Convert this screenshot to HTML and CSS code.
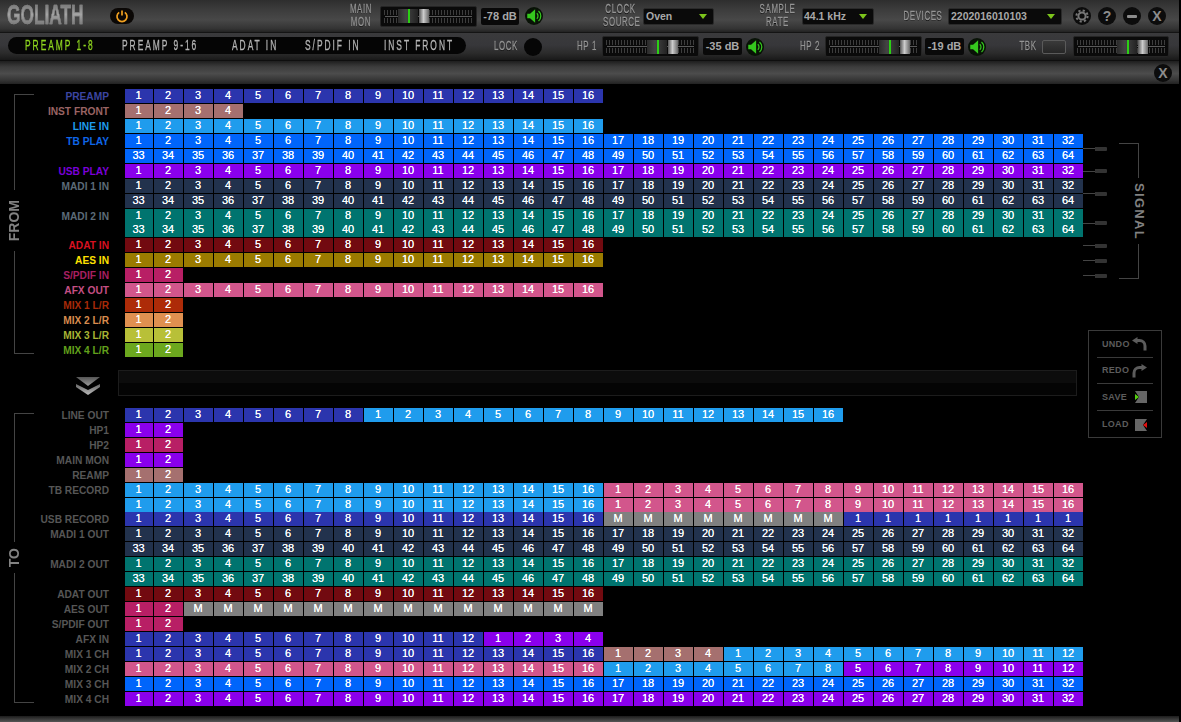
FILE: index.html
```html
<!DOCTYPE html>
<html lang="en">
<head>
<meta charset="utf-8">
<title>Goliath</title>
<link rel="stylesheet" href="styles.css">
</head>
<body>
<div class="app">
  <header class="bar top">
    <div class="logo">GOLIATH</div>
    <button class="power"><svg viewBox="0 0 14 14" width="14" height="14"><path d="M4.2 3.4a5 5 0 1 0 5.600 0" fill="none" stroke="#f0a020" stroke-width="1.7"/><path d="M7 1.500v5" stroke="#f0a020" stroke-width="1.7"/></svg></button>
    <div class="cap m-main">MAIN<br>MON</div>
    <div class="fader ml7"><div class="knob" style="margin-left:17px"><i></i></div><div class="knob2"></div></div>
    <div class="db ml4 w38">-78 dB</div>
    <div class="spk ml6"><svg viewBox="1 1 16 16" width="18" height="18"><path d="M3 7h2.500L10 3v12l-4.500-4H3z" fill="#35c81e"/><path d="M11.500 6.500a3.500 3.500 0 0 1 0 5M13 4.500a6 6 0 0 1 0 9" fill="none" stroke="#35c81e" stroke-width="1.100"/></svg></div>
    <div class="cap m-clock">CLOCK<br>SOURCE</div>
    <div class="drop ml5 w71">Oven<u></u></div>
    <div class="cap m-rate">SAMPLE<br>RATE</div>
    <div class="drop ml5 w72 tight">44.1 kHz<u></u></div>
    <div class="cap m-dev">DEVICES</div>
    <div class="drop ml5 w114">2202016010103<u></u></div>
    <div class="round m-gear"><svg viewBox="0 0 18 18" width="18" height="18"><circle cx="9" cy="9" r="3.600" fill="none" stroke="#777" stroke-width="2"/><circle cx="9" cy="9" r="5.600" fill="none" stroke="#777" stroke-width="2" stroke-dasharray="2.200 2.200"/></svg></div>
    <div class="round ml7">?</div>
    <div class="round ml7"><s></s></div>
    <div class="round ml7">X</div>
  </header>
  <nav class="bar sub">
    <div class="pill">
      <span class="tab on t1">PREAMP 1-8</span>
      <span class="tab t2">PREAMP 9-16</span>
      <span class="tab t3">ADAT IN</span>
      <span class="tab t4">S/PDIF IN</span>
      <span class="tab t5">INST FRONT</span>
    </div>
    <div class="cap m-lock">LOCK</div>
    <div class="lamp ml6"></div>
    <div class="cap m-hp1">HP 1</div>
    <div class="fader ml4"><div class="knob" style="margin-left:44px"><i></i></div><div class="knob2"></div></div>
    <div class="db ml4 w39">-35 dB</div>
    <div class="spk ml4"><svg viewBox="1 1 16 16" width="18" height="18"><path d="M3 7h2.500L10 3v12l-4.500-4H3z" fill="#35c81e"/><path d="M11.500 6.500a3.500 3.500 0 0 1 0 5M13 4.500a6 6 0 0 1 0 9" fill="none" stroke="#35c81e" stroke-width="1.100"/></svg></div>
    <div class="cap m-hp2">HP 2</div>
    <div class="fader ml4"><div class="knob" style="margin-left:53px"><i></i></div><div class="knob2"></div></div>
    <div class="db ml3 w39">-19 dB</div>
    <div class="spk ml4"><svg viewBox="1 1 16 16" width="18" height="18"><path d="M3 7h2.500L10 3v12l-4.500-4H3z" fill="#35c81e"/><path d="M11.500 6.500a3.500 3.500 0 0 1 0 5M13 4.500a6 6 0 0 1 0 9" fill="none" stroke="#35c81e" stroke-width="1.100"/></svg></div>
    <div class="cap m-tbk">TBK</div>
    <div class="tbk ml4"></div>
    <div class="fader ml7 w96"><div class="knob" style="margin-left:43px"><i></i></div><div class="knob2"></div></div>
  </nav>
  <div class="bar strip"><div class="round">X</div></div>

  <main class="patch">
    <section class="block from">
      <div class="bracket"><div class="seg-line first-line"></div><div class="side">FROM</div><div class="seg-line last-line"></div></div>
      <div class="rows">
        <div class="row"><span class="lbl l-navy">PREAMP</span><div class="cells navy"><b>1</b><b>2</b><b>3</b><b>4</b><b>5</b><b>6</b><b>7</b><b>8</b><b>9</b><b>10</b><b>11</b><b>12</b><b>13</b><b>14</b><b>15</b><b>16</b></div></div>
        <div class="row"><span class="lbl l-rose">INST FRONT</span><div class="cells rose"><b>1</b><b>2</b><b>3</b><b>4</b></div></div>
        <div class="row"><span class="lbl l-sky">LINE IN</span><div class="cells sky"><b>1</b><b>2</b><b>3</b><b>4</b><b>5</b><b>6</b><b>7</b><b>8</b><b>9</b><b>10</b><b>11</b><b>12</b><b>13</b><b>14</b><b>15</b><b>16</b></div></div>
        <div class="row"><span class="lbl l-blue">TB PLAY</span><div class="cells blue"><b>1</b><b>2</b><b>3</b><b>4</b><b>5</b><b>6</b><b>7</b><b>8</b><b>9</b><b>10</b><b>11</b><b>12</b><b>13</b><b>14</b><b>15</b><b>16</b><b>17</b><b>18</b><b>19</b><b>20</b><b>21</b><b>22</b><b>23</b><b>24</b><b>25</b><b>26</b><b>27</b><b>28</b><b>29</b><b>30</b><b>31</b><b>32</b></div></div>
        <div class="row"><span class="lbl"></span><div class="cells blue"><b>33</b><b>34</b><b>35</b><b>36</b><b>37</b><b>38</b><b>39</b><b>40</b><b>41</b><b>42</b><b>43</b><b>44</b><b>45</b><b>46</b><b>47</b><b>48</b><b>49</b><b>50</b><b>51</b><b>52</b><b>53</b><b>54</b><b>55</b><b>56</b><b>57</b><b>58</b><b>59</b><b>60</b><b>61</b><b>62</b><b>63</b><b>64</b></div></div>
        <div class="row"><span class="lbl l-purple">USB PLAY</span><div class="cells purple"><b>1</b><b>2</b><b>3</b><b>4</b><b>5</b><b>6</b><b>7</b><b>8</b><b>9</b><b>10</b><b>11</b><b>12</b><b>13</b><b>14</b><b>15</b><b>16</b><b>17</b><b>18</b><b>19</b><b>20</b><b>21</b><b>22</b><b>23</b><b>24</b><b>25</b><b>26</b><b>27</b><b>28</b><b>29</b><b>30</b><b>31</b><b>32</b></div></div>
        <div class="row"><span class="lbl l-slate">MADI 1 IN</span><div class="cells slate"><b>1</b><b>2</b><b>3</b><b>4</b><b>5</b><b>6</b><b>7</b><b>8</b><b>9</b><b>10</b><b>11</b><b>12</b><b>13</b><b>14</b><b>15</b><b>16</b><b>17</b><b>18</b><b>19</b><b>20</b><b>21</b><b>22</b><b>23</b><b>24</b><b>25</b><b>26</b><b>27</b><b>28</b><b>29</b><b>30</b><b>31</b><b>32</b></div></div>
        <div class="row"><span class="lbl"></span><div class="cells slate"><b>33</b><b>34</b><b>35</b><b>36</b><b>37</b><b>38</b><b>39</b><b>40</b><b>41</b><b>42</b><b>43</b><b>44</b><b>45</b><b>46</b><b>47</b><b>48</b><b>49</b><b>50</b><b>51</b><b>52</b><b>53</b><b>54</b><b>55</b><b>56</b><b>57</b><b>58</b><b>59</b><b>60</b><b>61</b><b>62</b><b>63</b><b>64</b></div></div>
        <div class="row"><span class="lbl l-slate">MADI 2 IN</span><div class="cells teal"><b>1</b><b>2</b><b>3</b><b>4</b><b>5</b><b>6</b><b>7</b><b>8</b><b>9</b><b>10</b><b>11</b><b>12</b><b>13</b><b>14</b><b>15</b><b>16</b><b>17</b><b>18</b><b>19</b><b>20</b><b>21</b><b>22</b><b>23</b><b>24</b><b>25</b><b>26</b><b>27</b><b>28</b><b>29</b><b>30</b><b>31</b><b>32</b></div></div>
        <div class="row"><span class="lbl"></span><div class="cells teal"><b>33</b><b>34</b><b>35</b><b>36</b><b>37</b><b>38</b><b>39</b><b>40</b><b>41</b><b>42</b><b>43</b><b>44</b><b>45</b><b>46</b><b>47</b><b>48</b><b>49</b><b>50</b><b>51</b><b>52</b><b>53</b><b>54</b><b>55</b><b>56</b><b>57</b><b>58</b><b>59</b><b>60</b><b>61</b><b>62</b><b>63</b><b>64</b></div></div>
        <div class="row"><span class="lbl l-red">ADAT IN</span><div class="cells wine"><b>1</b><b>2</b><b>3</b><b>4</b><b>5</b><b>6</b><b>7</b><b>8</b><b>9</b><b>10</b><b>11</b><b>12</b><b>13</b><b>14</b><b>15</b><b>16</b></div></div>
        <div class="row"><span class="lbl l-yellow">AES IN</span><div class="cells olive"><b>1</b><b>2</b><b>3</b><b>4</b><b>5</b><b>6</b><b>7</b><b>8</b><b>9</b><b>10</b><b>11</b><b>12</b><b>13</b><b>14</b><b>15</b><b>16</b></div></div>
        <div class="row"><span class="lbl l-magenta">S/PDIF IN</span><div class="cells magenta"><b>1</b><b>2</b></div></div>
        <div class="row"><span class="lbl l-pink">AFX OUT</span><div class="cells pink"><b>1</b><b>2</b><b>3</b><b>4</b><b>5</b><b>6</b><b>7</b><b>8</b><b>9</b><b>10</b><b>11</b><b>12</b><b>13</b><b>14</b><b>15</b><b>16</b></div></div>
        <div class="row"><span class="lbl l-rust">MIX 1 L/R</span><div class="cells rust"><b>1</b><b>2</b></div></div>
        <div class="row"><span class="lbl l-orange">MIX 2 L/R</span><div class="cells orange"><b>1</b><b>2</b></div></div>
        <div class="row"><span class="lbl l-lime">MIX 3 L/R</span><div class="cells lime"><b>1</b><b>2</b></div></div>
        <div class="row"><span class="lbl l-green">MIX 4 L/R</span><div class="cells green"><b>1</b><b>2</b></div></div>
      </div>
      <div class="ticks">
        <div class="tick t-a"></div><div class="tick t-b"></div><div class="tick t-c"></div><div class="tick t-d"></div><div class="tick t-e"></div><div class="tick t-f"></div><div class="tick t-g"></div>
      </div>
      <div class="signal"><div class="seg-line first-line"></div><div class="side-r">SIGNAL</div><div class="seg-line last-line"></div></div>
    </section>

    <div class="middle">
      <div class="arrows"><svg viewBox="0 0 26 18" width="26" height="18"><defs><linearGradient id="ga" x1="0" y1="0" x2="0" y2="1"><stop offset="0" stop-color="#555"/><stop offset="1" stop-color="#999"/></linearGradient><linearGradient id="gb" x1="0" y1="0" x2="0" y2="1"><stop offset="0" stop-color="#666"/><stop offset="1" stop-color="#bbb"/></linearGradient></defs><path d="M1 0h24L13 9z" fill="url(#ga)"/><path d="M1 7l12 6 12-6v3L13 18 1 10z" fill="url(#gb)"/></svg></div>
      <div class="display"></div>
    </div>

    <section class="block to">
      <div class="bracket"><div class="seg-line first-line"></div><div class="side">TO</div><div class="seg-line last-line"></div></div>
      <div class="rows">
        <div class="row"><span class="lbl">LINE OUT</span><div class="cells"><span class="seg navy"><b>1</b><b>2</b><b>3</b><b>4</b><b>5</b><b>6</b><b>7</b><b>8</b></span><span class="seg sky"><b>1</b><b>2</b><b>3</b><b>4</b><b>5</b><b>6</b><b>7</b><b>8</b><b>9</b><b>10</b><b>11</b><b>12</b><b>13</b><b>14</b><b>15</b><b>16</b></span></div></div>
        <div class="row"><span class="lbl">HP1</span><div class="cells purple"><b>1</b><b>2</b></div></div>
        <div class="row"><span class="lbl">HP2</span><div class="cells magenta"><b>1</b><b>2</b></div></div>
        <div class="row"><span class="lbl">MAIN MON</span><div class="cells purple"><b>1</b><b>2</b></div></div>
        <div class="row"><span class="lbl">REAMP</span><div class="cells rose"><b>1</b><b>2</b></div></div>
        <div class="row"><span class="lbl">TB RECORD</span><div class="cells"><span class="seg sky"><b>1</b><b>2</b><b>3</b><b>4</b><b>5</b><b>6</b><b>7</b><b>8</b><b>9</b><b>10</b><b>11</b><b>12</b><b>13</b><b>14</b><b>15</b><b>16</b></span><span class="seg pink"><b>1</b><b>2</b><b>3</b><b>4</b><b>5</b><b>6</b><b>7</b><b>8</b><b>9</b><b>10</b><b>11</b><b>12</b><b>13</b><b>14</b><b>15</b><b>16</b></span></div></div>
        <div class="row"><span class="lbl"></span><div class="cells"><span class="seg sky"><b>1</b><b>2</b><b>3</b><b>4</b><b>5</b><b>6</b><b>7</b><b>8</b><b>9</b><b>10</b><b>11</b><b>12</b><b>13</b><b>14</b><b>15</b><b>16</b></span><span class="seg pink"><b>1</b><b>2</b><b>3</b><b>4</b><b>5</b><b>6</b><b>7</b><b>8</b><b>9</b><b>10</b><b>11</b><b>12</b><b>13</b><b>14</b><b>15</b><b>16</b></span></div></div>
        <div class="row"><span class="lbl">USB RECORD</span><div class="cells"><span class="seg navy"><b>1</b><b>2</b><b>3</b><b>4</b><b>5</b><b>6</b><b>7</b><b>8</b><b>9</b><b>10</b><b>11</b><b>12</b><b>13</b><b>14</b><b>15</b><b>16</b></span><span class="seg grey"><b>M</b><b>M</b><b>M</b><b>M</b><b>M</b><b>M</b><b>M</b><b>M</b></span><span class="seg navy"><b>1</b><b>1</b><b>1</b><b>1</b><b>1</b><b>1</b><b>1</b><b>1</b></span></div></div>
        <div class="row"><span class="lbl">MADI 1 OUT</span><div class="cells slate"><b>1</b><b>2</b><b>3</b><b>4</b><b>5</b><b>6</b><b>7</b><b>8</b><b>9</b><b>10</b><b>11</b><b>12</b><b>13</b><b>14</b><b>15</b><b>16</b><b>17</b><b>18</b><b>19</b><b>20</b><b>21</b><b>22</b><b>23</b><b>24</b><b>25</b><b>26</b><b>27</b><b>28</b><b>29</b><b>30</b><b>31</b><b>32</b></div></div>
        <div class="row"><span class="lbl"></span><div class="cells slate"><b>33</b><b>34</b><b>35</b><b>36</b><b>37</b><b>38</b><b>39</b><b>40</b><b>41</b><b>42</b><b>43</b><b>44</b><b>45</b><b>46</b><b>47</b><b>48</b><b>49</b><b>50</b><b>51</b><b>52</b><b>53</b><b>54</b><b>55</b><b>56</b><b>57</b><b>58</b><b>59</b><b>60</b><b>61</b><b>62</b><b>63</b><b>64</b></div></div>
        <div class="row"><span class="lbl">MADI 2 OUT</span><div class="cells teal"><b>1</b><b>2</b><b>3</b><b>4</b><b>5</b><b>6</b><b>7</b><b>8</b><b>9</b><b>10</b><b>11</b><b>12</b><b>13</b><b>14</b><b>15</b><b>16</b><b>17</b><b>18</b><b>19</b><b>20</b><b>21</b><b>22</b><b>23</b><b>24</b><b>25</b><b>26</b><b>27</b><b>28</b><b>29</b><b>30</b><b>31</b><b>32</b></div></div>
        <div class="row"><span class="lbl"></span><div class="cells teal"><b>33</b><b>34</b><b>35</b><b>36</b><b>37</b><b>38</b><b>39</b><b>40</b><b>41</b><b>42</b><b>43</b><b>44</b><b>45</b><b>46</b><b>47</b><b>48</b><b>49</b><b>50</b><b>51</b><b>52</b><b>53</b><b>54</b><b>55</b><b>56</b><b>57</b><b>58</b><b>59</b><b>60</b><b>61</b><b>62</b><b>63</b><b>64</b></div></div>
        <div class="row"><span class="lbl">ADAT OUT</span><div class="cells wine"><b>1</b><b>2</b><b>3</b><b>4</b><b>5</b><b>6</b><b>7</b><b>8</b><b>9</b><b>10</b><b>11</b><b>12</b><b>13</b><b>14</b><b>15</b><b>16</b></div></div>
        <div class="row"><span class="lbl">AES OUT</span><div class="cells"><span class="seg magenta"><b>1</b><b>2</b></span><span class="seg grey"><b>M</b><b>M</b><b>M</b><b>M</b><b>M</b><b>M</b><b>M</b><b>M</b><b>M</b><b>M</b><b>M</b><b>M</b><b>M</b><b>M</b></span></div></div>
        <div class="row"><span class="lbl">S/PDIF OUT</span><div class="cells magenta"><b>1</b><b>2</b></div></div>
        <div class="row"><span class="lbl">AFX IN</span><div class="cells"><span class="seg navy"><b>1</b><b>2</b><b>3</b><b>4</b><b>5</b><b>6</b><b>7</b><b>8</b><b>9</b><b>10</b><b>11</b><b>12</b></span><span class="seg purple"><b>1</b><b>2</b><b>3</b><b>4</b></span></div></div>
        <div class="row"><span class="lbl">MIX 1 CH</span><div class="cells"><span class="seg navy"><b>1</b><b>2</b><b>3</b><b>4</b><b>5</b><b>6</b><b>7</b><b>8</b><b>9</b><b>10</b><b>11</b><b>12</b><b>13</b><b>14</b><b>15</b><b>16</b></span><span class="seg rose"><b>1</b><b>2</b><b>3</b><b>4</b></span><span class="seg sky"><b>1</b><b>2</b><b>3</b><b>4</b><b>5</b><b>6</b><b>7</b><b>8</b><b>9</b><b>10</b><b>11</b><b>12</b></span></div></div>
        <div class="row"><span class="lbl">MIX 2 CH</span><div class="cells"><span class="seg pink"><b>1</b><b>2</b><b>3</b><b>4</b><b>5</b><b>6</b><b>7</b><b>8</b><b>9</b><b>10</b><b>11</b><b>12</b><b>13</b><b>14</b><b>15</b><b>16</b></span><span class="seg sky"><b>1</b><b>2</b><b>3</b><b>4</b><b>5</b><b>6</b><b>7</b><b>8</b></span><span class="seg purple"><b>5</b><b>6</b><b>7</b><b>8</b><b>9</b><b>10</b><b>11</b><b>12</b></span></div></div>
        <div class="row"><span class="lbl">MIX 3 CH</span><div class="cells blue"><b>1</b><b>2</b><b>3</b><b>4</b><b>5</b><b>6</b><b>7</b><b>8</b><b>9</b><b>10</b><b>11</b><b>12</b><b>13</b><b>14</b><b>15</b><b>16</b><b>17</b><b>18</b><b>19</b><b>20</b><b>21</b><b>22</b><b>23</b><b>24</b><b>25</b><b>26</b><b>27</b><b>28</b><b>29</b><b>30</b><b>31</b><b>32</b></div></div>
        <div class="row"><span class="lbl">MIX 4 CH</span><div class="cells purple"><b>1</b><b>2</b><b>3</b><b>4</b><b>5</b><b>6</b><b>7</b><b>8</b><b>9</b><b>10</b><b>11</b><b>12</b><b>13</b><b>14</b><b>15</b><b>16</b><b>17</b><b>18</b><b>19</b><b>20</b><b>21</b><b>22</b><b>23</b><b>24</b><b>25</b><b>26</b><b>27</b><b>28</b><b>29</b><b>30</b><b>31</b><b>32</b></div></div>
      </div>
    </section>

    <aside class="history">
      <div class="hist-row"><span>UNDO</span><svg viewBox="0 0 15 14" width="15" height="14"><path d="M4 3.500h3.500a5.500 5.500 0 0 1 5.500 5.500v4.500" fill="none" stroke="#5c5c5c" stroke-width="3"/><path d="M0 3.500L5.500 0v7z" fill="#5c5c5c"/></svg></div>
      <div class="hist-row"><span>REDO</span><svg viewBox="0 0 15 14" width="15" height="14"><path d="M11 3.500H7.500A5.500 5.500 0 0 0 2 9v4.500" fill="none" stroke="#5c5c5c" stroke-width="3"/><path d="M15 3.500L9.500 0v7z" fill="#5c5c5c"/></svg></div>
      <div class="hist-row"><span>SAVE</span><svg viewBox="0 0 12 12" width="12" height="12"><path d="M0 0h12v12H0l4-6z" fill="#666"/><path d="M0 3l4 3-4 3z" fill="#55d010"/></svg></div>
      <div class="hist-row"><span>LOAD</span><svg viewBox="0 0 12 12" width="12" height="12"><path d="M0 0h12L8 6l4 6H0z" fill="#666"/><path d="M12 3L8 6l4 3z" fill="#e01010"/></svg></div>
    </aside>
  </main>
  <footer class="foot"></footer>
</div>
</body>
</html>
```
FILE: styles.css
```css
*{box-sizing:border-box}
html,body{margin:0;height:100%;background:#000}
body{font-family:"Liberation Sans",Arial,sans-serif;overflow:hidden}
.app{width:1179px;height:722px;display:flex;flex-direction:column;background:#000}

.bar{display:flex;align-items:center;flex:none}
.top{height:33px;background:linear-gradient(#2e2e2e,#3c3c3c 30%,#484848 62%,#333 90%,#222);border-bottom:1px solid #141414}
.sub{height:28px;background:linear-gradient(#3a3a3c,#37373a 45%,#2b2b2b 75%,#191919);border-bottom:1px solid #0e0e0e}
.strip{height:23px;justify-content:flex-end;padding-right:7px;background:linear-gradient(#1e1e1e,#3c3c3c 25%,#4c4c4c 55%,#333 85%,#222)}

/* squeezed display lettering: --w is the room it takes, --s the horizontal scale */
.logo,.cap,.tab{flex:none;width:calc(var(--w)/var(--s));margin-right:calc(var(--w) - var(--w)/var(--s));transform:scaleX(var(--s));transform-origin:left center;white-space:nowrap}

.logo{--w:76px;--s:.64;margin-left:7px;font:bold 27px/1.1 "Liberation Sans",sans-serif;background:linear-gradient(#6a6a6a,#a4a4a4 45%,#5e5e5e);-webkit-background-clip:text;background-clip:text;color:transparent;-webkit-text-stroke:.5px #858585}
.power{margin:0 0 0 27px;padding:0;width:24px;height:16px;border:0;border-radius:8px;background:#0a0705;display:flex;align-items:center;justify-content:center;flex:none}

.cap{--s:.63;font:12.5px/13px "Liberation Sans",sans-serif;color:#959595;letter-spacing:1px;text-align:center;text-shadow:0 1px 0 #111;-webkit-text-stroke:.3px #959595}
.m-main{--w:24px;margin-left:215px}
.m-clock{--w:35px;margin-left:60px}
.m-rate{--w:39px;margin-left:44px}
.m-dev{--w:40px;margin-left:29px}
.m-gear{margin-left:11px}
.m-lock{--w:24px;margin-left:28px}
.m-hp1{--w:22px;margin-left:34px}
.m-hp2{--w:22px;margin-left:35px}
.m-tbk{--w:20px;margin-left:32px}
.w38{width:38px}.w39{width:39px}.w71{width:71px}.w72{width:72px}.w114{width:114px}
.ml3{margin-left:3px}.ml4{margin-left:4px}.ml5{margin-left:5px}.ml6{margin-left:6px}.ml7{margin-left:7px}

.fader{flex:none;width:97px;height:21px;display:flex;align-items:center;border:1px solid #252525;border-radius:2px;
  background:
    linear-gradient(#5a5a5a,#5a5a5a) 4px 9px/87px 1px no-repeat,
    repeating-linear-gradient(90deg,#3d3d3d 0 1px,transparent 1px 3px) 3px 3px/89px 5px no-repeat,
    repeating-linear-gradient(90deg,#3d3d3d 0 1px,transparent 1px 3px) 3px 11px/89px 5px no-repeat,
    #0a0a0a}
.fader.w96{width:96px}
.knob{width:20px;height:14px;background:linear-gradient(90deg,#2a2a2a,#444 40%,#222);flex:none}
.knob i{display:block;width:2px;height:14px;margin-left:10px;background:#2bd014}
.knob2{width:10px;height:14px;margin-left:1px;background:linear-gradient(90deg,#555,#ccc 45%,#666);flex:none}
.db{flex:none;height:17px;background:#090909;border-radius:2px;font:bold 11px/17px "Liberation Sans",sans-serif;color:#a8a8a8;text-align:center;white-space:nowrap}
.spk{flex:none;width:18px;height:18px;border-radius:50%;background:#081206;display:flex}
.drop{flex:none;height:17px;background:#0a0a0a;border:1px solid #2a2a2a;border-radius:2px;font:bold 10.5px/15px "Liberation Sans",sans-serif;color:#a8a8a8;padding-left:2px;display:flex;justify-content:space-between;align-items:center}
.drop.tight{padding-left:1px}
.drop u{width:0;height:0;border:4px solid transparent;border-top:5px solid #7cc41c;border-bottom:0;margin-right:6px}
.round{flex:none;width:18px;height:18px;border-radius:50%;background:#0c0c0c;color:#8c8c8c;font:bold 14px/18px "Liberation Sans",sans-serif;text-align:center;display:flex;align-items:center;justify-content:center}
.round s{display:block;width:10px;height:3px;border-radius:1px;background:#8c8c8c}

.pill{flex:none;margin-left:8px;margin-top:-2px;width:458px;height:17px;border-radius:9px;background:#050505;padding-left:17px;display:flex;align-items:center}
.tab{--s:.6;font:14px/17px "Liberation Sans",sans-serif;letter-spacing:3.3px;color:#b4b4b4;-webkit-text-stroke:.3px #b4b4b4}
.tab.on{color:#8ed41f;-webkit-text-stroke:.3px #8ed41f}
.t1{--w:97px}.t2{--w:110px}.t3{--w:73px}.t4{--w:79px}.t5{--w:66px}
.lamp{flex:none;width:18px;height:18px;border-radius:50%;background:#060606}
.tbk{flex:none;width:24px;height:14px;border:1px solid #5a5a5a;border-radius:2px;background:linear-gradient(#3a3a3a,#262626)}

.patch{position:relative;flex:none;padding-top:5px}
.block{display:flex}
.bracket{flex:none;width:33px;display:flex;flex-direction:column;align-items:flex-start;padding:5px 0 4px}
.seg-line{flex:1;width:20px;margin-left:14px;border-left:1px solid #444}
.first-line{border-top:1px solid #444}
.last-line{border-bottom:1px solid #444}
.from .bracket .first-line{flex:0 0 96px}
.side{width:28px;padding:10px 0;font:bold 14px/28px "Liberation Sans",sans-serif;color:#828282;writing-mode:vertical-rl;transform:rotate(180deg);text-align:center}
.to .side{padding:6px 0}

.rows{flex:none}
.row{display:flex;height:14.94px}
.lbl{flex:none;width:91px;padding-right:15px;text-align:right;font:bold 10.2px/15px "Liberation Sans",sans-serif;color:#565656;white-space:nowrap}
.cells{display:flex;gap:1px;height:14px}
.seg{display:contents}
.cells b{flex:none;width:29px;height:14px;font:normal 11px/13px "Liberation Sans",sans-serif;color:#fff;text-align:center;padding-right:1px;text-shadow:0 0 .6px #fff}
.cells>b:first-child,.cells>.seg:first-child>b:first-child{margin-left:1px;width:28px}

.navy b{background:#2b35ad}.rose b{background:#a5706f}.sky b{background:#1f9ced}.blue b{background:#0065fb}
.purple b{background:#8a00ec}.slate b{background:#22324d}.teal b{background:#00746f}.wine b{background:#720a10}
.olive b{background:#9b7b00}.magenta b{background:#b81f65}.pink b{background:#d2568c}.rust b{background:#ad2b08}
.orange b{background:#e09050}.lime b{background:#b8c038}.green b{background:#6ca81e}.grey b{background:#808080}

.l-navy{color:#3c45a0}.l-rose{color:#9a6464}.l-sky{color:#1f9ced}.l-blue{color:#0f66e8}.l-purple{color:#7a00d8}
.l-slate{color:#5c6b78}.l-red{color:#d81020}.l-yellow{color:#ffe000}.l-magenta{color:#a81f60}.l-pink{color:#c44f84}
.l-rust{color:#a82a08}.l-orange{color:#d88c4e}.l-lime{color:#a8b434}.l-green{color:#62a01c}

.ticks{flex:none;width:24px;display:grid;grid-template-rows:repeat(18,14.94px)}
.tick{align-self:center;height:4px;border-radius:1px;
  background:linear-gradient(#333,#333) 12px 0/12px 4px no-repeat,linear-gradient(#444,#444) 0 1.5px/12px 1px no-repeat}
.t-a{grid-row:4/6}.t-b{grid-row:6/7}.t-c{grid-row:7/9}.t-d{grid-row:9/11}.t-e{grid-row:11/12}.t-f{grid-row:12/13}.t-g{grid-row:13/14}
.signal{flex:none;width:26px;height:136px;margin:54px 0 0 12px;display:flex;flex-direction:column;align-items:flex-end}
.signal .seg-line{margin-left:0;width:20px;margin-right:6px;border-left:0;border-right:1px solid #444}
.side-r{width:12px;font:bold 13px/12px "Liberation Sans",sans-serif;letter-spacing:1.3px;color:#828282;writing-mode:vertical-rl;padding:5px 0 4px;text-align:center}

.middle{height:50px;display:flex;align-items:flex-start}
.arrows{flex:none;margin:19px 0 0 75px;width:26px;height:18px;display:flex}
.display{margin:12px 0 0 17px;width:959px;height:26px;border:1px solid #1c1c1c;background:linear-gradient(#0c0c0c 50%,#040404 50%)}

.history{position:absolute;left:1088px;top:246px;width:74px;height:108px;border:1px solid #3a3a3a;padding:0 8px}
.hist-row{height:26.6px;padding:1px 6px 0 5px;display:flex;align-items:center;justify-content:space-between;border-bottom:1px solid #3a3a3a;font:bold 9px/1 "Liberation Sans",sans-serif;letter-spacing:.3px;color:#5c5c5c}
.hist-row:last-child{border-bottom:0}

.foot{flex:1;margin-top:9px;background:linear-gradient(#1c1c1c,#555)}
```
